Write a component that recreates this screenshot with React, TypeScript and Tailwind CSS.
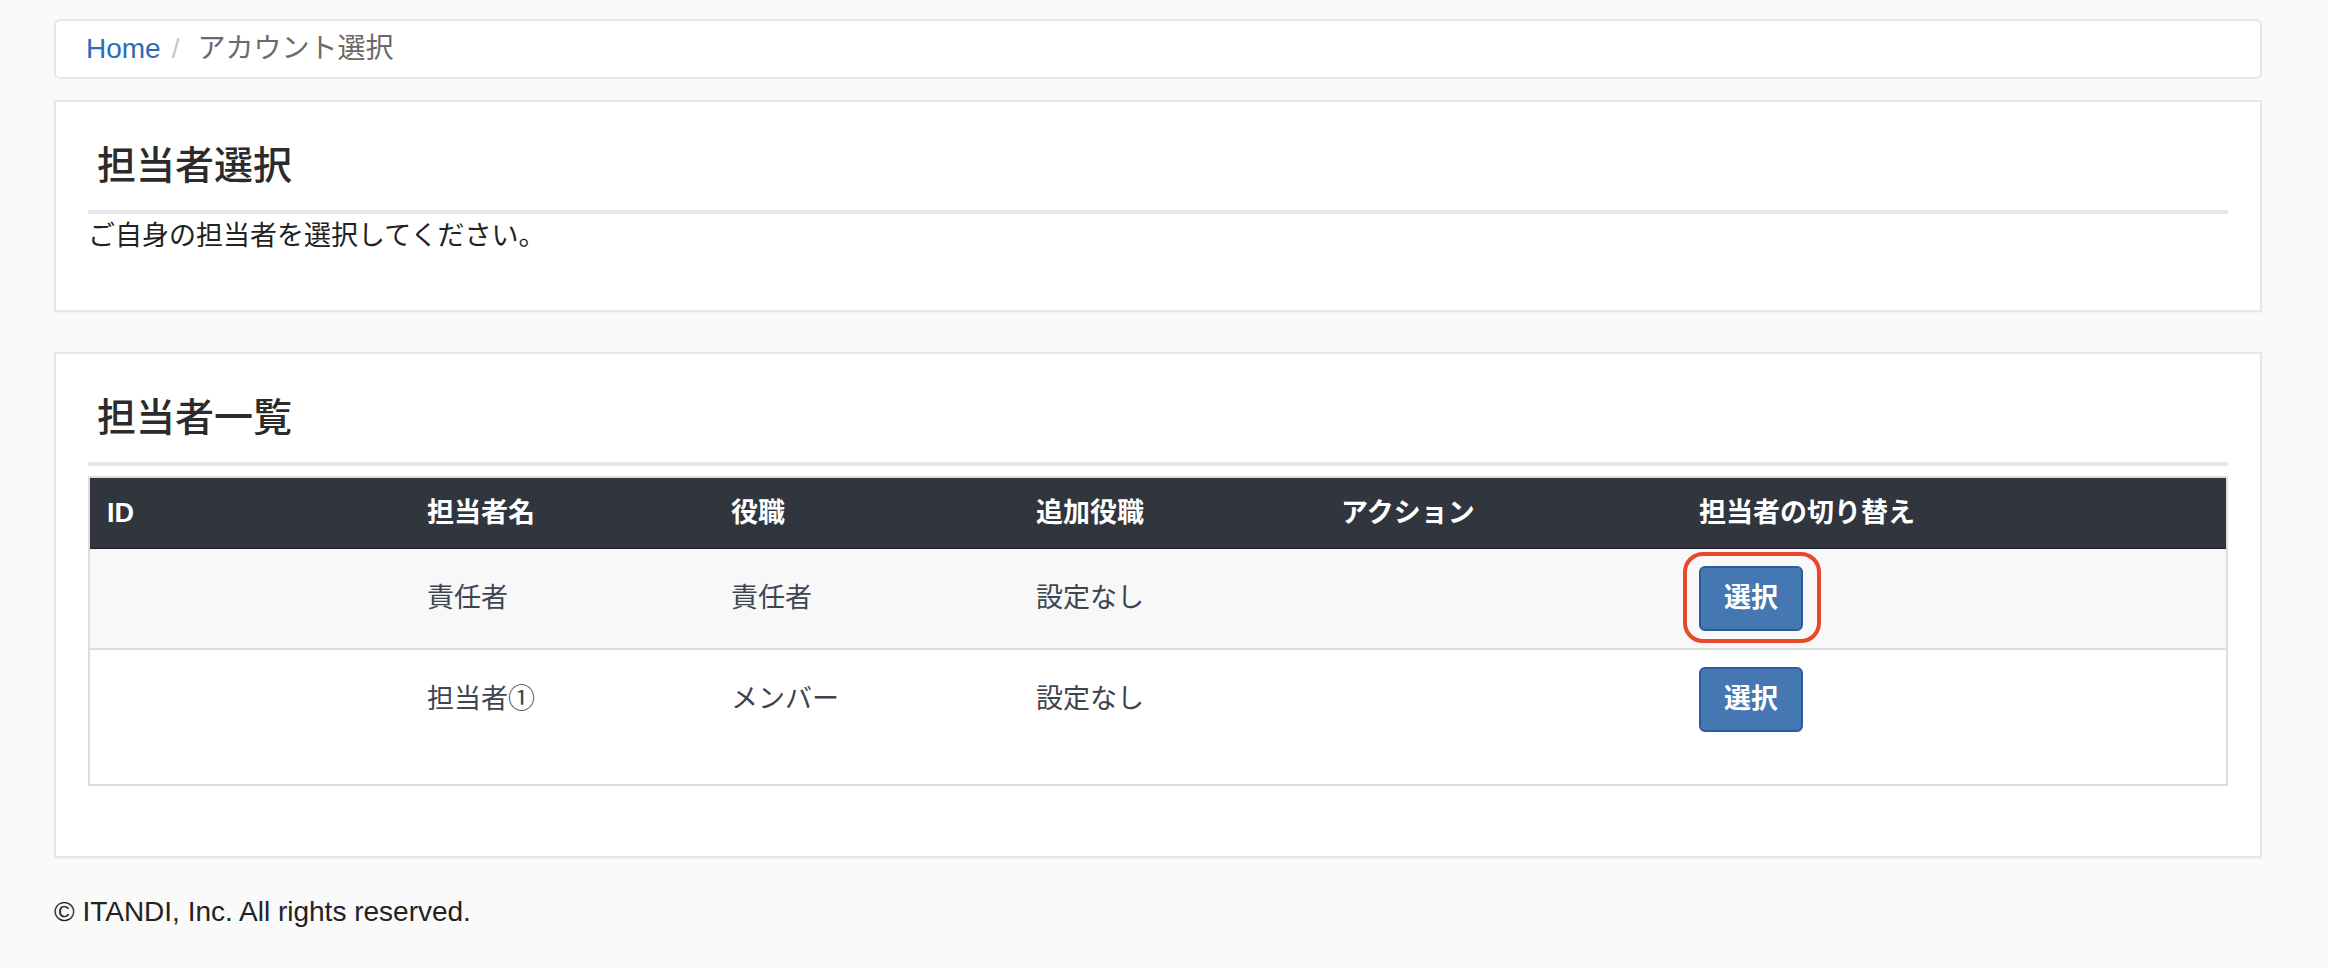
import React from 'react';

interface Member {
  id: string;
  name: string;
  role: string;
  extraRole: string;
  current?: boolean;
}

const members: Member[] = [
  { id: '', name: '責任者', role: '責任者', extraRole: '設定なし', current: true },
  { id: '', name: '担当者①', role: 'メンバー', extraRole: '設定なし' },
];

const columns = [
  { label: 'ID', width: 'w-[321px]' },
  { label: '担当者名', width: 'w-[304px]' },
  { label: '役職', width: 'w-[305px]' },
  { label: '追加役職', width: 'w-[305px]' },
  { label: 'アクション', width: 'w-[358px]' },
  { label: '担当者の切り替え', width: '' },
];

const SelectButton: React.FC<{ highlighted?: boolean }> = ({ highlighted }) => (
  <span className="relative inline-block align-middle">
    <button
      type="button"
      className="w-[104px] h-[65px] rounded-[6px] bg-[#4577b2] border-2 border-[#2b5c9c] text-white text-[27px] font-bold leading-none"
    >
      選択
    </button>
    {highlighted && (
      <span className="pointer-events-none absolute -left-[16px] -top-[14px] w-[138px] h-[91px] rounded-[20px] border-4 border-[#e8472b]"></span>
    )}
  </span>
);

const App: React.FC = () => {
  return (
    <div className="min-h-screen bg-[#fafafa] pl-[54px] pr-[66px] pt-[19px] pb-[40px] text-[#222] font-['Liberation_Sans','Noto_Sans_CJK_JP',sans-serif]">
      {/* Breadcrumb */}
      <nav className="h-[60px] flex items-center bg-white border-2 border-[#e5e6ea] rounded-[6px] pl-[30px] text-[28px]">
        <a className="text-[#2c6cb6]">Home</a>
        <span className="ml-[11px] mr-[18px] text-[#c8c8c8]">/</span>
        <span className="text-[#6a6a6a]">アカウント選択</span>
      </nav>

      {/* 担当者選択 */}
      <section className="mt-[21px] bg-white border-2 border-[#e6e7eb] shadow-[0_1px_2px_rgba(0,0,0,0.04)] px-[32px] pt-[40px] pb-[54px]">
        <h3 className="pl-[9px] text-[39px] leading-[48px] font-medium text-[#2b2b2b]">担当者選択</h3>
        <div className="mt-[20px] h-[4px] bg-[#e6e7eb]"></div>
        <p className="mt-[2px] text-[27px] leading-[40px] text-[#222]">ご自身の担当者を選択してください。</p>
      </section>

      {/* 担当者一覧 */}
      <section className="mt-[40px] bg-white border-2 border-[#e6e7eb] shadow-[0_1px_2px_rgba(0,0,0,0.04)] px-[32px] pt-[40px] pb-[70px]">
        <h3 className="pl-[9px] text-[39px] leading-[48px] font-medium text-[#2b2b2b]">担当者一覧</h3>
        <div className="mt-[20px] h-[4px] bg-[#e6e7eb]"></div>
        <table className="mt-[10px] w-full table-fixed border-collapse border-2 border-[#dedede] text-[27px]">
          <thead>
            <tr className="bg-[#31363e] border-y border-[#1c2026]">
              {columns.map((c) => (
                <th key={c.label} className={`${c.width} h-[71px] pl-[17px] text-left font-bold text-white`}>
                  {c.label}
                </th>
              ))}
            </tr>
          </thead>
          <tbody className="text-[#3c4551]">
            {members.map((m, i) => (
              <tr key={m.name} className={i % 2 === 0 ? 'bg-[#f8f8f8]' : 'bg-white border-t-2 border-[#dedede]'}>
                <td className={`pl-[17px] pt-[17px] align-top ${i === members.length - 1 ? 'pb-[52px]' : 'pb-[17px]'}`}>
                  <div className="h-[65px] flex items-center">{m.id}</div>
                </td>
                <td className={`pl-[17px] pt-[17px] align-top ${i === members.length - 1 ? 'pb-[52px]' : 'pb-[17px]'}`}>
                  <div className="h-[65px] flex items-center">{m.name}</div>
                </td>
                <td className={`pl-[17px] pt-[17px] align-top ${i === members.length - 1 ? 'pb-[52px]' : 'pb-[17px]'}`}>
                  <div className="h-[65px] flex items-center">{m.role}</div>
                </td>
                <td className={`pl-[17px] pt-[17px] align-top ${i === members.length - 1 ? 'pb-[52px]' : 'pb-[17px]'}`}>
                  <div className="h-[65px] flex items-center">{m.extraRole}</div>
                </td>
                <td className={`pl-[17px] pt-[17px] align-top ${i === members.length - 1 ? 'pb-[52px]' : 'pb-[17px]'}`}>
                  <div className="h-[65px]"></div>
                </td>
                <td className={`pl-[17px] pt-[17px] align-top ${i === members.length - 1 ? 'pb-[52px]' : 'pb-[17px]'}`}>
                  <SelectButton highlighted={m.current} />
                </td>
              </tr>
            ))}
          </tbody>
        </table>
      </section>

      <footer className="mt-[34px] text-[28px] leading-[40px] text-[#222]">© ITANDI, Inc. All rights reserved.</footer>
    </div>
  );
};

export default App;
